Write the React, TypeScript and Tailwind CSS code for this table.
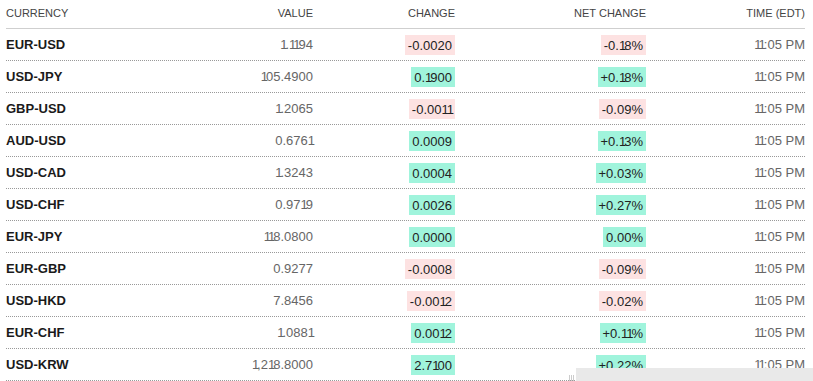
const rows = [
  { pair: 'EUR-USD', value: '1.1194', change: '-0.0020', net: '-0.18%' },
  { pair: 'USD-JPY', value: '105.4900', change: '0.1900', net: '+0.18%' },
  { pair: 'GBP-USD', value: '1.2065', change: '-0.0011', net: '-0.09%' },
  { pair: 'AUD-USD', value: '0.6761', change: '0.0009', net: '+0.13%' },
  { pair: 'USD-CAD', value: '1.3243', change: '0.0004', net: '+0.03%' },
  { pair: 'USD-CHF', value: '0.9719', change: '0.0026', net: '+0.27%' },
  { pair: 'EUR-JPY', value: '118.0800', change: '0.0000', net: '0.00%' },
  { pair: 'EUR-GBP', value: '0.9277', change: '-0.0008', net: '-0.09%' },
  { pair: 'USD-HKD', value: '7.8456', change: '-0.0012', net: '-0.02%' },
  { pair: 'EUR-CHF', value: '1.0881', change: '0.0012', net: '+0.11%' },
  { pair: 'USD-KRW', value: '1,218.8000', change: '2.7100', net: '+0.22%' },
]

// the source font has narrow "1" digits
function Num({ text }: { text: string }) {
  return (
    <>
      {text.split('').map((c, i) =>
        c === '1' ? <span key={i} className="tracking-[-2px]">1</span> : <span key={i}>{c}</span>
      )}
    </>
  )
}

function Badge({ text }: { text: string }) {
  const down = text.startsWith('-')
  return (
    <span className={`inline-flex h-5 items-center px-[3px] text-[13px] text-[#222] ${down ? 'bg-[#fde2e2]' : 'bg-[#a0f4dc]'}`}>
      <Num text={text} />
    </span>
  )
}

const cols = 'grid grid-cols-[154px_153px_142px_191px_159px]'

function App() {
  return (
    <div className="relative h-[381px] w-[813px] overflow-hidden bg-white pl-[6px] pr-[8px] font-['Liberation_Sans',Arial,sans-serif]">
      {/* Header */}
      <div className={`${cols} h-[29px] items-start border-b border-[#cfcfcf] pt-[5px] text-[11px] uppercase text-[#444]`}>
        <div>Currency</div>
        <div className="text-right">Value</div>
        <div className="text-right">Change</div>
        <div className="text-right">Net Change</div>
        <div className="text-right">Time (EDT)</div>
      </div>

      {rows.map(r => (
        <div key={r.pair} className={`${cols} h-[32px] items-center border-b border-dotted border-[#999]`}>
          <div className="text-[13px] font-bold text-[#1a1a1a]">{r.pair}</div>
          <div className="text-right text-[13px] text-[#666]"><Num text={r.value} /></div>
          <div className="text-right"><Badge text={r.change} /></div>
          <div className="text-right"><Badge text={r.net} /></div>
          <div className="text-right text-[13px] text-[#666]"><Num text="11:05 PM" /></div>
        </div>
      ))}

      {/* overlay strip at the bottom */}
      <div className="absolute bottom-0 left-[569px] flex h-[6px] gap-[1px]">
        <span className="w-px bg-[#ccc]" />
        <span className="w-px bg-[#ccc]" />
        <span className="w-px bg-[#ccc]" />
      </div>
      <div className="absolute bottom-0 left-[576px] right-0 h-[13px] bg-[#e9e9e9]" />
    </div>
  )
}

export default App
